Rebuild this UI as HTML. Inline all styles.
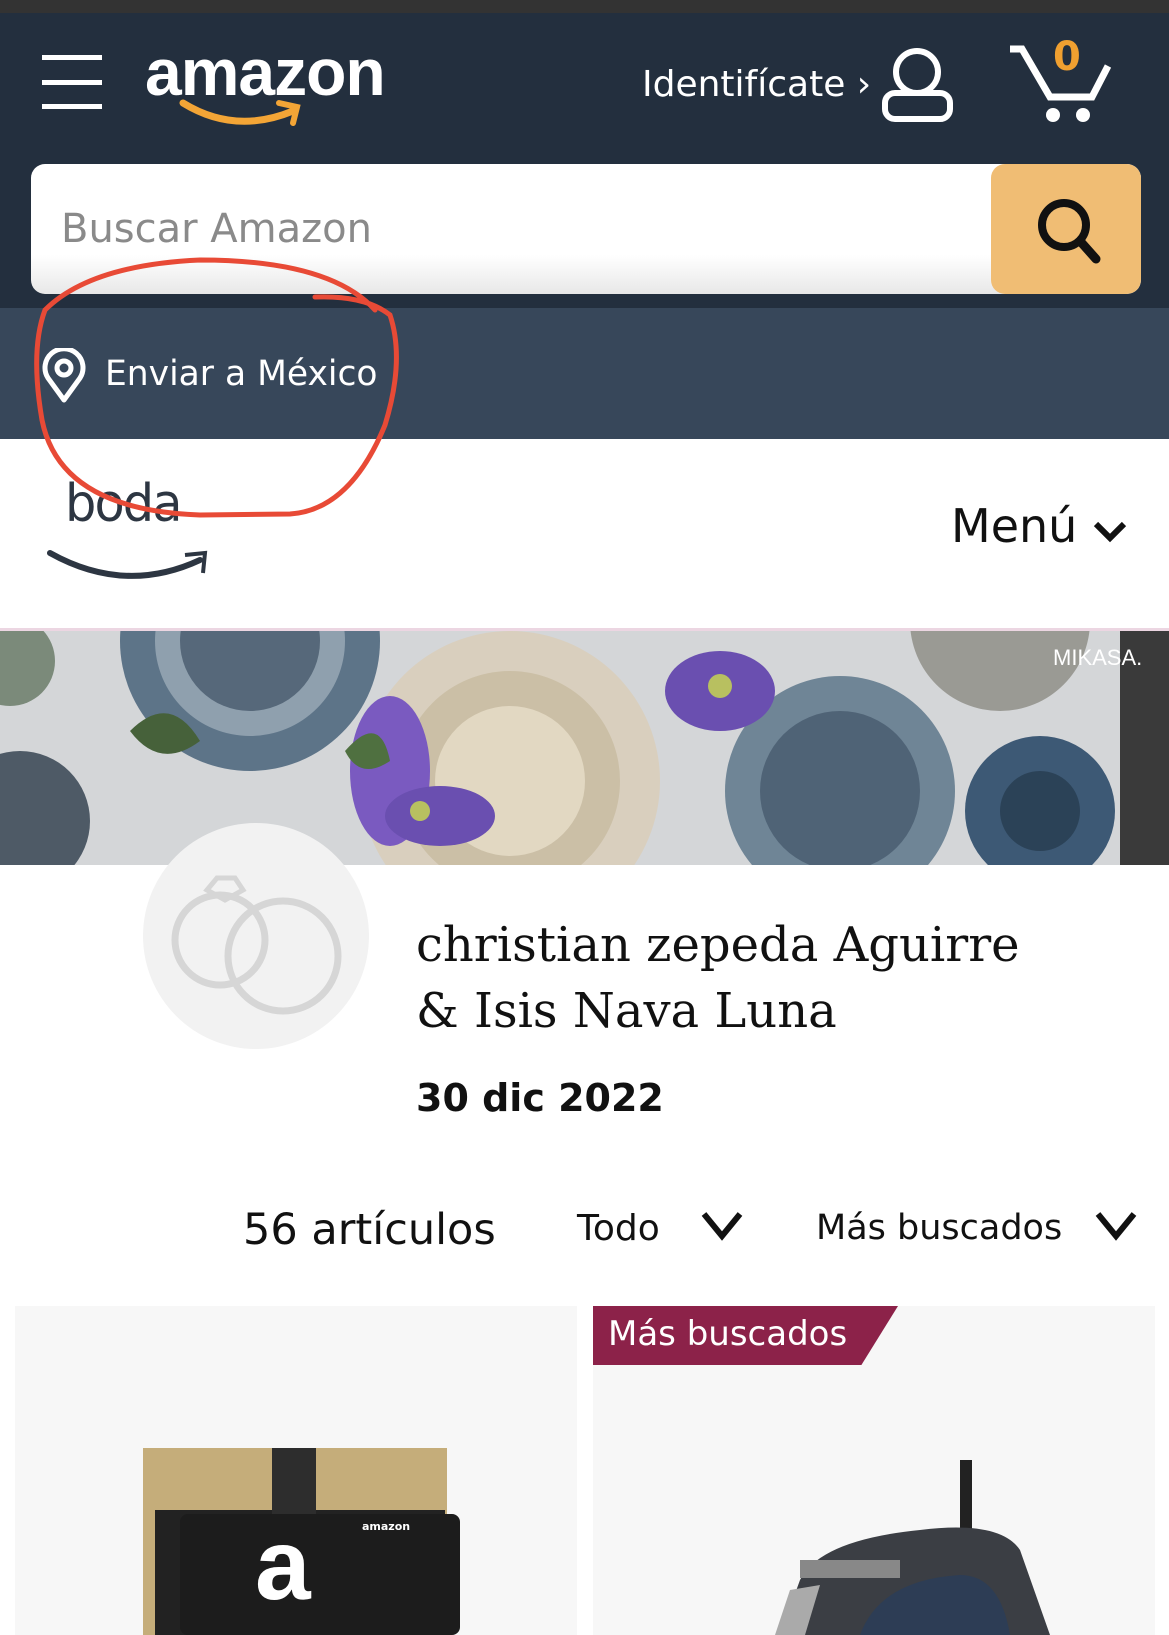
<!DOCTYPE html>
<html><head><meta charset="utf-8"><style>
*{margin:0;padding:0;box-sizing:border-box}
body{width:1169px;height:1635px;overflow:hidden;background:#fff;font-family:"DejaVu Sans","Liberation Sans",sans-serif;position:relative}
.abs{position:absolute}
</style></head><body>
<div class="abs" style="left:0;top:0;width:1169px;height:13px;background:#333"></div>
<div class="abs" style="left:0;top:13px;width:1169px;height:296px;background:#232f3e"></div>
<div class="abs" style="left:42px;top:55px;width:60px;height:5px;background:#fff"></div>
<div class="abs" style="left:42px;top:80px;width:60px;height:5px;background:#fff"></div>
<div class="abs" style="left:42px;top:104px;width:60px;height:5px;background:#fff"></div>
<div class="abs" style="left:145px;top:34px;color:#fff;font-family:'Liberation Sans',sans-serif;font-weight:bold;font-size:66px;letter-spacing:-1px">amazon</div>
<svg class="abs" style="left:175px;top:95px" width="140" height="40"><path d="M8 8 Q60 40 118 16" stroke="#f3a536" stroke-width="7" fill="none" stroke-linecap="round"/><path d="M104 8 L122 12 L118 28" stroke="#f3a536" stroke-width="6" fill="none" stroke-linecap="round"/></svg>
<div class="abs" style="left:642px;top:64px;color:#fff;font-size:36px">Identifícate ›</div>
<svg class="abs" style="left:880px;top:46px" width="75" height="78"><circle cx="37" cy="26" r="21" stroke="#fff" stroke-width="6" fill="none"/><rect x="5" y="47" width="65" height="26" rx="10" stroke="#fff" stroke-width="6" fill="none"/></svg>
<svg class="abs" style="left:1005px;top:40px" width="110" height="85"><path d="M5 9 L17 9 L45 57 L87 57 L103 26" stroke="#fff" stroke-width="7" fill="none"/><circle cx="48" cy="75" r="7" fill="#fff"/><circle cx="78" cy="75" r="7" fill="#fff"/></svg>
<div class="abs" style="left:1053px;top:34px;color:#f0a030;font-weight:bold;font-size:40px">0</div>
<div class="abs" style="left:31px;top:164px;width:1110px;height:130px;background:linear-gradient(#fff 70%,#e8e8e8);border-radius:14px;overflow:hidden">
<div class="abs" style="left:30px;top:42px;color:#8a8a8a;font-size:40px">Buscar Amazon</div>
<div class="abs" style="right:0;top:0;width:150px;height:130px;background:#f0bd74;border-radius:14px"></div>
</div>
<svg class="abs" style="left:1030px;top:195px" width="75" height="75"><circle cx="34" cy="30" r="22" stroke="#111" stroke-width="8" fill="none"/><path d="M50 46 L66 64" stroke="#111" stroke-width="9" stroke-linecap="round"/></svg>
<div class="abs" style="left:0;top:308px;width:1169px;height:131px;background:#37475a"></div>
<svg class="abs" style="left:40px;top:348px" width="50" height="58"><path d="M24 52 L8 30 A19 19 0 1 1 40 30 Z" stroke="#fff" stroke-width="5" fill="none" stroke-linejoin="round"/><circle cx="24" cy="20" r="7" stroke="#fff" stroke-width="5" fill="none"/></svg>
<div class="abs" style="left:105px;top:354px;color:#fff;font-size:34.5px">Enviar a México</div>
<div class="abs" style="left:65px;top:474px;color:#2d3642;font-size:52px;letter-spacing:-2px;transform:scaleX(0.95);transform-origin:left">boda</div>
<svg class="abs" style="left:45px;top:545px" width="170" height="40"><path d="M5 8 Q80 50 155 15" stroke="#2d3642" stroke-width="6" fill="none" stroke-linecap="round"/><path d="M140 10 L160 8 L158 28" stroke="#2d3642" stroke-width="4" fill="none"/></svg>
<div class="abs" style="left:951px;top:499px;color:#111;font-size:46px">Menú</div>
<svg class="abs" style="left:1092px;top:518px" width="36" height="26"><path d="M4 6 L18 20 L32 6" stroke="#111" stroke-width="6" fill="none"/></svg>
<svg class="abs" style="left:0;top:250px" width="420" height="290"><path d="M315 47 Q365 45 390 65 Q405 110 385 175 Q350 260 290 264 L200 265 Q60 260 42 170 Q30 100 45 60 Q90 15 200 10 Q330 10 375 60" stroke="#e84a36" stroke-width="5" fill="none" stroke-linecap="round"/></svg>
<div class="abs" style="left:0;top:628px;width:1169px;height:3px;background:#ecd6e2"></div>
<div class="abs" style="left:0;top:631px;width:1169px;height:234px;background:#cfd3d8;overflow:hidden">
<svg width="1169" height="234">
<rect width="1169" height="234" fill="#d4d6d8"/>
<circle cx="250" cy="10" r="130" fill="#5d7488"/><circle cx="250" cy="10" r="95" fill="#8fa0ae"/><circle cx="250" cy="10" r="70" fill="#56687a"/>
<circle cx="510" cy="150" r="150" fill="#d9cfbe"/><circle cx="510" cy="150" r="110" fill="#cbbfa6"/><circle cx="510" cy="150" r="75" fill="#e2d8c2"/>
<circle cx="840" cy="160" r="115" fill="#6f8596"/><circle cx="840" cy="160" r="80" fill="#4f6376"/>
<circle cx="1040" cy="180" r="75" fill="#3d5975"/><circle cx="1040" cy="180" r="40" fill="#2b4257"/>
<circle cx="1000" cy="-10" r="90" fill="#9a9a94"/><rect x="1120" y="0" width="49" height="234" fill="#3a3a3a"/>
<circle cx="20" cy="190" r="70" fill="#4e5a66"/><circle cx="10" cy="30" r="45" fill="#7b8a7a"/>
<ellipse cx="720" cy="60" rx="55" ry="40" fill="#6a4fb0"/><ellipse cx="390" cy="140" rx="40" ry="75" fill="#7a5ac0"/><ellipse cx="440" cy="185" rx="55" ry="30" fill="#6a4fb0"/>
<circle cx="720" cy="55" r="12" fill="#b8c060"/><circle cx="420" cy="180" r="10" fill="#b8c060"/>
<path d="M130 100 Q170 60 200 110 Q160 140 130 100Z" fill="#46613a"/><path d="M345 120 Q380 80 390 130 Q360 150 345 120Z" fill="#4f7040"/>
</svg>
<div class="abs" style="left:1053px;top:14px;color:#fff;font-size:22px;font-family:'Liberation Sans',sans-serif">MIKASA.</div>
</div>
<div class="abs" style="left:143px;top:823px;width:226px;height:226px;border-radius:50%;background:#f2f2f2"></div>
<svg class="abs" style="left:155px;top:870px" width="200" height="150"><circle cx="65" cy="70" r="45" stroke="#d6d6d6" stroke-width="7" fill="none"/><circle cx="128" cy="86" r="55" stroke="#d6d6d6" stroke-width="7" fill="none"/><path d="M52 20 L62 8 L80 8 L88 20 L70 30 Z" stroke="#d6d6d6" stroke-width="5" fill="none"/></svg>
<div class="abs" style="left:416px;top:912px;color:#111;font-family:'DejaVu Serif',serif;font-size:48px;line-height:66px;white-space:nowrap">christian zepeda Aguirre<br>&amp; Isis Nava Luna</div>
<div class="abs" style="left:416px;top:1076px;color:#111;font-weight:bold;font-size:38px">30 dic 2022</div>
<div class="abs" style="left:243px;top:1205px;color:#111;font-size:43px">56 artículos</div>
<div class="abs" style="left:577px;top:1208px;color:#111;font-size:36px">Todo</div>
<svg class="abs" style="left:700px;top:1210px" width="45" height="32"><path d="M4 4 L22 26 L40 4" stroke="#111" stroke-width="6" fill="none"/></svg>
<div class="abs" style="left:816px;top:1208px;color:#111;font-size:35px">Más buscados</div>
<svg class="abs" style="left:1094px;top:1210px" width="45" height="32"><path d="M4 4 L22 26 L40 4" stroke="#111" stroke-width="6" fill="none"/></svg>
<div class="abs" style="left:15px;top:1306px;width:562px;height:329px;background:#f7f7f7"></div>
<div class="abs" style="left:593px;top:1306px;width:562px;height:329px;background:#f7f7f7"></div>
<div class="abs" style="left:593px;top:1306px;width:305px;height:59px;background:#8c2249;clip-path:polygon(0 0,100% 0,88% 100%,0 100%)"></div>
<div class="abs" style="left:608px;top:1314px;color:#fff;font-size:34px">Más buscados</div>
<div class="abs" style="left:143px;top:1448px;width:304px;height:187px;background:#c5ad7a"></div>
<div class="abs" style="left:155px;top:1510px;width:290px;height:125px;background:#222"></div>
<div class="abs" style="left:272px;top:1448px;width:44px;height:70px;background:#2d2d2d"></div>
<div class="abs" style="left:180px;top:1514px;width:280px;height:121px;background:#1c1c1c;border-radius:8px"></div>
<div class="abs" style="left:255px;top:1508px;color:#fff;font-weight:bold;font-size:100px;font-family:'Liberation Sans',sans-serif">a</div>
<div class="abs" style="left:362px;top:1520px;color:#fff;font-weight:bold;font-size:11px">amazon</div>
<svg class="abs" style="left:760px;top:1460px" width="300" height="175"><rect x="200" y="0" width="12" height="80" fill="#222"/><path d="M20 175 L40 120 Q60 80 160 70 Q240 60 260 90 L290 175 Z" fill="#3b3e44"/><path d="M100 175 Q120 120 200 115 Q240 115 250 175 Z" fill="#2d3d55"/><rect x="40" y="100" width="100" height="18" fill="#888"/><path d="M15 175 L30 130 L60 125 L45 175Z" fill="#aaa"/></svg>
</body></html>
